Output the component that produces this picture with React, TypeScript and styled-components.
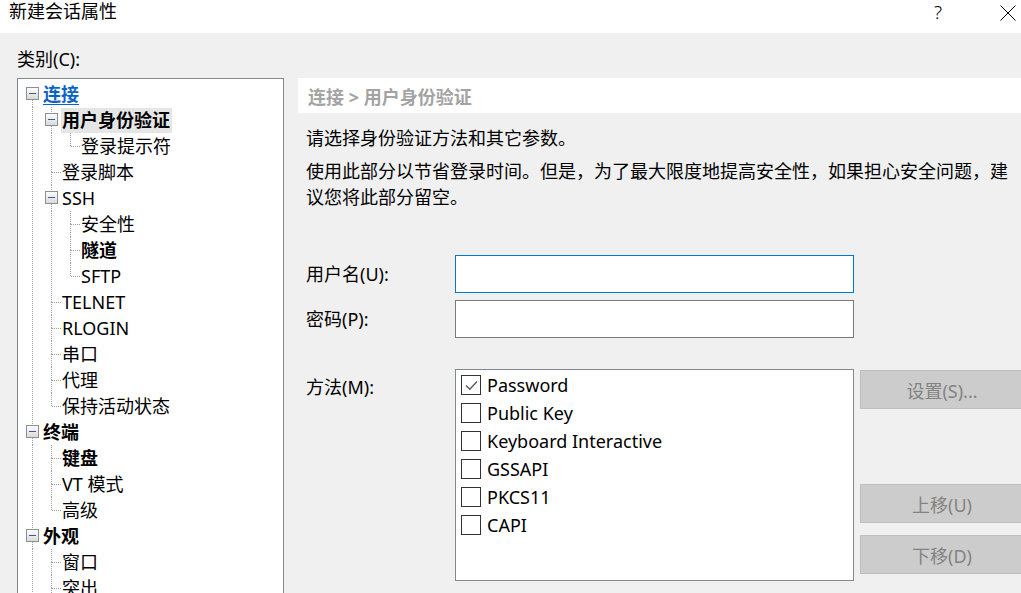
import styled, { createGlobalStyle } from "styled-components";

const FONT = `"Noto Sans", "Noto Sans CJK SC", sans-serif`;

const GlobalStyle = createGlobalStyle`
  html, body {
    margin: 0;
    padding: 0;
  }
  body {
    width: 1021px;
    height: 593px;
    overflow: hidden;
    background: #f0f0f0;
    font-family: ${FONT};
    font-size: 18px;
    color: #000;
  }
`;

const Window = styled.div`
  width: 1021px;
  height: 593px;
  display: flex;
  flex-direction: column;
  overflow: hidden;
`;

// Title bar
const TitleBar = styled.div`
  height: 33px;
  flex: none;
  background: #fff;
  display: flex;
  align-items: flex-start;
  padding-left: 9px;
`;

const Title = styled.span`
  flex: 1;
  line-height: 23px;
`;

const HelpButton = styled.span`
  width: 20px;
  height: 24px;
  margin-right: 47px;
  display: flex;
  align-items: center;
  justify-content: center;
  font-size: 19px;
  font-weight: 300;
`;

const CloseButton = styled.span`
  width: 26px;
  height: 26px;
  display: flex;
  align-items: center;
  justify-content: center;
`;

// Body
const Body = styled.div`
  flex: 1;
  min-height: 0;
  display: grid;
  grid-template-columns: 267px 1fr;
  grid-template-rows: 45px 1fr;
  column-gap: 14px;
  padding-left: 17px;
`;

const CategoryLabel = styled.div`
  grid-column: 1 / 3;
  padding-top: 13px;
  line-height: 26px;
`;

const TreeBox = styled.div`
  background: #fff;
  border: 1px solid #828790;
  border-bottom: none;
  padding: 2px 0 0 5px;
  overflow: hidden;
`;

const TreeRow = styled.div`
  height: 26px;
  display: flex;
  align-items: center;
  white-space: nowrap;
`;

const Cell = styled.svg`
  flex: none;
  width: 19px;
  height: 26px;
  display: block;
`;

const NodeText = styled.span<{ $bold?: boolean; $link?: boolean; $selected?: boolean }>`
  padding: 0 2px 0 1px;
  line-height: 25px;
  font-weight: ${(p) => (p.$bold || p.$link ? 700 : 400)};
  color: ${(p) => (p.$link ? "#0a64c8" : "#000")};
  text-decoration: ${(p) => (p.$link ? "underline" : "none")};
  text-underline-offset: 3px;
  background: ${(p) => (p.$selected ? "#e5e5e5" : "transparent")};
`;

// Right panel
const Panel = styled.div`
  display: flex;
  flex-direction: column;
  overflow: hidden;
`;

const Crumb = styled.div`
  height: 35px;
  flex: none;
  background: #fff;
  padding-left: 10px;
  display: flex;
  align-items: center;
  font-weight: 700;
  color: #a3a3a3;
`;

const IntroGroup = styled.div`
  margin-top: 12px;
  display: flex;
  flex-direction: column;
  gap: 7px;
`;

const Intro = styled.p`
  margin: 0;
  padding-left: 8px;
  line-height: 26px;
  white-space: nowrap;
`;

const Form = styled.div`
  margin-top: 45px;
  padding-left: 8px;
  display: grid;
  grid-template-columns: 143px 399px 164px;
  grid-template-rows: 38px 38px 212px;
  row-gap: 7px;
  column-gap: 6px;
`;

const FieldLabel = styled.div<{ $top?: boolean }>`
  display: flex;
  align-items: ${(p) => (p.$top ? "flex-start" : "center")};
  padding-top: ${(p) => (p.$top ? "5px" : "0")};
  margin-top: ${(p) => (p.$top ? "24px" : "0")};
  line-height: 26px;
`;

const TextInput = styled.div<{ $focused?: boolean }>`
  grid-column: 2 / 4;
  width: 399px;
  box-sizing: border-box;
  background: #fff;
  border: 1px solid ${(p) => (p.$focused ? "#0078d7" : "#7a7a7a")};
`;

const ListBox = styled.div`
  margin-top: 24px;
  background: #fff;
  border: 1px solid #828790;
  padding: 1px 0 0 5px;
  box-sizing: border-box;
  height: 212px;
`;

const CheckRow = styled.div`
  height: 28px;
  display: flex;
  align-items: center;
  gap: 6px;
  white-space: nowrap;
`;

const CheckBox = styled.span`
  width: 20px;
  height: 20px;
  box-sizing: border-box;
  border: 1px solid #333;
  display: flex;
  align-items: center;
  justify-content: center;
  flex: none;
`;

const ButtonColumn = styled.div`
  margin-top: 24px;
  display: flex;
  flex-direction: column;
  gap: 12px;
  padding: 1px 0 7px;
  box-sizing: border-box;
  height: 212px;
`;

const Button = styled.div<{ $pushDown?: boolean }>`
  height: 39px;
  box-sizing: border-box;
  flex: none;
  background: #cccccc;
  border: 1px solid #bfbfbf;
  color: #838383;
  display: flex;
  align-items: center;
  justify-content: center;
  margin-top: ${(p) => (p.$pushDown ? "auto" : "0")};
`;

// Tree data
type TreeNode = {
  label: string;
  bold?: boolean;
  link?: boolean;
  selected?: boolean;
  children?: TreeNode[];
};

const tree: TreeNode[] = [
  {
    label: "连接",
    link: true,
    children: [
      { label: "用户身份验证", bold: true, selected: true, children: [{ label: "登录提示符" }] },
      { label: "登录脚本" },
      {
        label: "SSH",
        children: [{ label: "安全性" }, { label: "隧道", bold: true }, { label: "SFTP" }],
      },
      { label: "TELNET" },
      { label: "RLOGIN" },
      { label: "串口" },
      { label: "代理" },
      { label: "保持活动状态" },
    ],
  },
  {
    label: "终端",
    bold: true,
    children: [{ label: "键盘", bold: true }, { label: "VT 模式" }, { label: "高级" }],
  },
  {
    label: "外观",
    bold: true,
    children: [{ label: "窗口" }, { label: "突出" }, { label: "边距" }],
  },
  { label: "高级", bold: true },
];

const DOT = "#a0a0a0";

const Guide = ({ on }: { on: boolean }) => (
  <Cell viewBox="0 0 19 26">
    {on && <line x1="9.5" y1="0" x2="9.5" y2="26" stroke={DOT} strokeDasharray="1 1" shapeRendering="crispEdges" />}
  </Cell>
);

const Connector = ({ top, bottom, expander }: { top: boolean; bottom: boolean; expander: boolean }) => (
  <Cell viewBox="0 0 19 26">
    {top && <line x1="9.5" y1="0" x2="9.5" y2="13" stroke={DOT} strokeDasharray="1 1" shapeRendering="crispEdges" />}
    {bottom && <line x1="9.5" y1="13" x2="9.5" y2="26" stroke={DOT} strokeDasharray="1 1" shapeRendering="crispEdges" />}
    {!expander && <line x1="10" y1="13.5" x2="19" y2="13.5" stroke={DOT} strokeDasharray="1 1" shapeRendering="crispEdges" />}
    {expander && (
      <>
        <defs>
          <linearGradient id="exp" x1="0" y1="0" x2="0" y2="1">
            <stop offset="0" stopColor="#ffffff" />
            <stop offset="1" stopColor="#d8d8d8" />
          </linearGradient>
        </defs>
        <rect x="3.5" y="6.5" width="12" height="12" fill="url(#exp)" stroke="#8e8f8f" shapeRendering="crispEdges" />
        <line x1="6" y1="12.5" x2="13" y2="12.5" stroke="#3a5a9c" shapeRendering="crispEdges" />
      </>
    )}
  </Cell>
);

const renderTree = (nodes: TreeNode[], guides: boolean[]): JSX.Element[] =>
  nodes.flatMap((node, i) => {
    const last = i === nodes.length - 1;
    const firstRoot = guides.length === 0 && i === 0;
    const row = (
      <TreeRow key={`${guides.length}-${node.label}-${i}`}>
        {guides.map((on, g) => (
          <Guide key={g} on={on} />
        ))}
        <Connector top={!firstRoot} bottom={!last} expander={!!node.children} />
        <NodeText $bold={node.bold} $link={node.link} $selected={node.selected}>
          {node.label}
        </NodeText>
      </TreeRow>
    );
    return [row, ...(node.children ? renderTree(node.children, [...guides, !last]) : [])];
  });

const methods = [
  { name: "Password", checked: true },
  { name: "Public Key" },
  { name: "Keyboard Interactive" },
  { name: "GSSAPI" },
  { name: "PKCS11" },
  { name: "CAPI" },
];

export default function App() {
  return (
    <>
      <GlobalStyle />
      <Window>
        <TitleBar>
          <Title>新建会话属性</Title>
          <HelpButton>?</HelpButton>
          <CloseButton>
            <svg width="16" height="16" viewBox="0 0 16 16">
              <path d="M0.5 0.5 L15.5 15.5 M15.5 0.5 L0.5 15.5" stroke="#000" strokeWidth="1" fill="none" />
            </svg>
          </CloseButton>
        </TitleBar>

        <Body>
          <CategoryLabel>类别(C):</CategoryLabel>
          <TreeBox>{renderTree(tree, [])}</TreeBox>

          <Panel>
            <Crumb>连接 &gt; 用户身份验证</Crumb>
            <IntroGroup>
              <Intro>请选择身份验证方法和其它参数。</Intro>
              <div>
                <Intro>使用此部分以节省登录时间。但是，为了最大限度地提高安全性，如果担心安全问题，建</Intro>
                <Intro>议您将此部分留空。</Intro>
              </div>
            </IntroGroup>

            <Form>
              <FieldLabel>用户名(U):</FieldLabel>
              <TextInput $focused />
              <FieldLabel>密码(P):</FieldLabel>
              <TextInput />
              <FieldLabel $top>方法(M):</FieldLabel>
              <ListBox>
                {methods.map((m) => (
                  <CheckRow key={m.name}>
                    <CheckBox>
                      {m.checked && (
                        <svg width="15" height="15" viewBox="0 0 15 15">
                          <path d="M2 7.5 L5.8 11.3 L13 3.5" stroke="#555" strokeWidth="1.3" fill="none" />
                        </svg>
                      )}
                    </CheckBox>
                    {m.name}
                  </CheckRow>
                ))}
              </ListBox>
              <ButtonColumn>
                <Button>设置(S)...</Button>
                <Button $pushDown>上移(U)</Button>
                <Button>下移(D)</Button>
              </ButtonColumn>
            </Form>
          </Panel>
        </Body>
      </Window>
    </>
  );
}
